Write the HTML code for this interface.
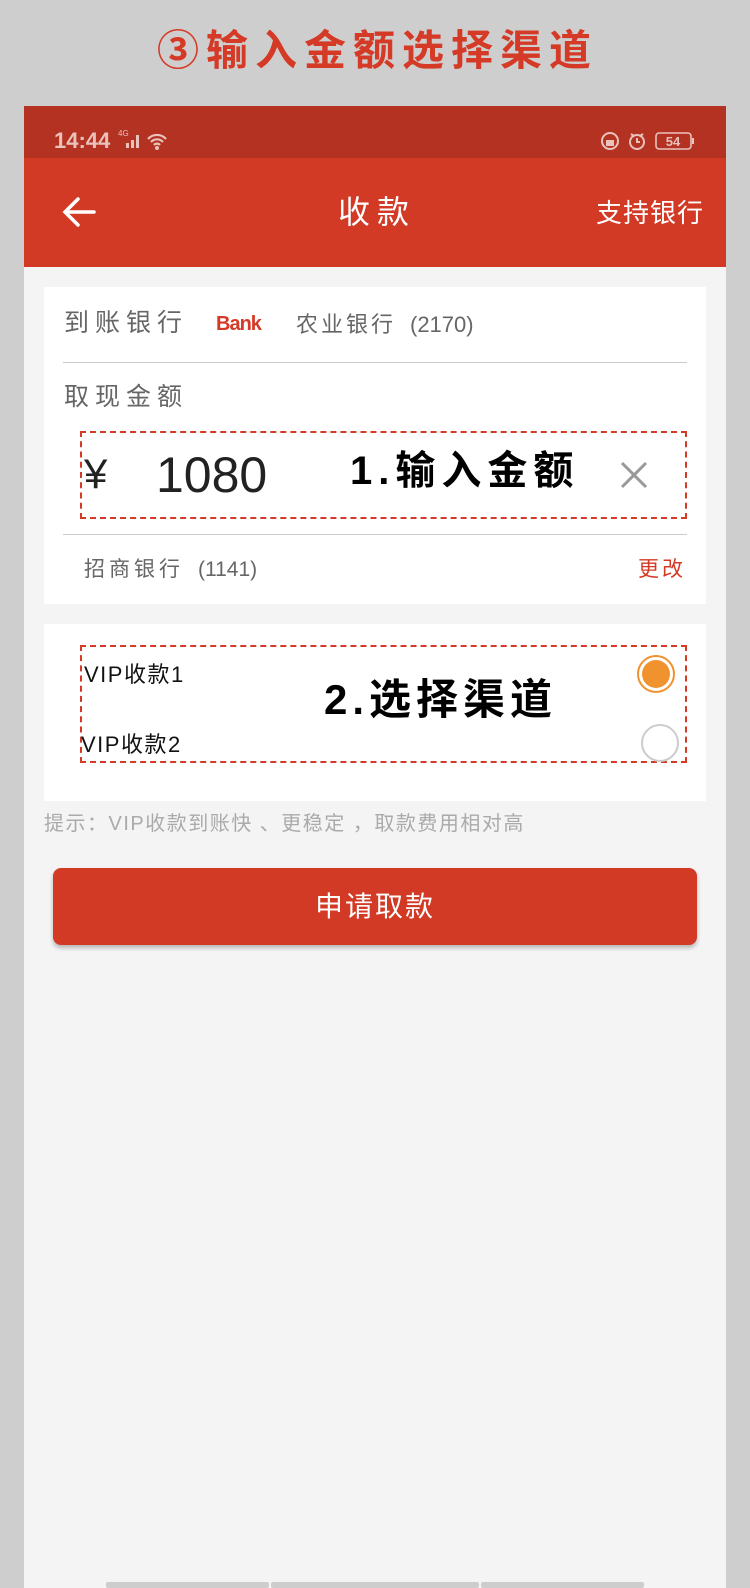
<!DOCTYPE html>
<html><head><meta charset="utf-8"><style>
*{margin:0;padding:0;box-sizing:border-box}
body{width:750px;height:1588px;background:#cecece;position:relative;overflow:hidden;font-family:"Liberation Sans","Noto Sans CJK SC",sans-serif}
.a{position:absolute;white-space:nowrap;line-height:1}
</style></head><body>
<div class="a" style="left:157px;top:30px;font-size:42px;font-weight:bold;color:#d43a26;letter-spacing:7px">③输入金额选择渠道</div>
<div class="a" style="left:24px;top:106px;width:702px;height:1482px;background:#f4f4f4"></div>
<div class="a" style="left:24px;top:106px;width:702px;height:52px;background:#b33222"></div>
<div class="a" style="left:54px;top:130px;font-size:22px;font-weight:bold;color:#e9c2bc">14:44</div>
<div class="a" style="left:118px;top:130px;font-size:8px;color:#e9c2bc">4G</div>
<svg class="a" style="left:126px;top:131px" width="50" height="20"><g fill="#e9c2bc"><rect x="0" y="12" width="3" height="5"/><rect x="5" y="9" width="3" height="8"/><rect x="10" y="4" width="3" height="13"/></g><path d="M22 8a12 12 0 0 1 18 0M25 11a8 8 0 0 1 12 0M28 14a4 4 0 0 1 6 0" stroke="#e9c2bc" stroke-width="2.2" fill="none"/><circle cx="31" cy="17" r="2" fill="#e9c2bc"/></svg>
<svg class="a" style="left:600px;top:130px" width="95" height="22"><circle cx="10" cy="11" r="8" fill="none" stroke="#e9c2bc" stroke-width="2"/><rect x="6" y="10" width="8" height="6" fill="#e9c2bc"/><circle cx="37" cy="12" r="7" fill="none" stroke="#e9c2bc" stroke-width="2"/><path d="M37 8v4h3M31 4l3 2M43 4l-3 2" stroke="#e9c2bc" stroke-width="2" fill="none"/><rect x="56" y="3" width="35" height="16" rx="3" fill="none" stroke="#e9c2bc" stroke-width="1.6"/><rect x="92" y="8" width="2" height="6" fill="#e9c2bc"/><text x="73" y="16" font-size="13" font-weight="bold" fill="#e9c2bc" text-anchor="middle" font-family="Liberation Sans">54</text></svg>
<div class="a" style="left:24px;top:158px;width:702px;height:109px;background:#d33a26"></div>
<svg class="a" style="left:62px;top:196px" width="34" height="32"><path d="M32 16H4M16 3L3 16l13 13" stroke="#fff" stroke-width="3.5" fill="none" stroke-linecap="round"/></svg>
<div class="a" style="left:338px;top:196px;font-size:32px;color:#fff;letter-spacing:7px">收款</div>
<div class="a" style="left:596px;top:200px;font-size:26px;color:#fff;letter-spacing:1px">支持银行</div>

<div class="a" style="left:44px;top:287px;width:662px;height:317px;background:#fff"></div>
<div class="a" style="left:64px;top:311px;font-size:25px;color:#666;letter-spacing:6px">到账银行</div>
<div class="a" style="left:216px;top:314px;font-size:20px;font-weight:bold;color:#d43a26;letter-spacing:-1px">Bank</div>
<div class="a" style="left:296px;top:314px;font-size:22px;color:#666;letter-spacing:3px">农业银行</div>
<div class="a" style="left:410px;top:314px;font-size:22px;color:#666">(2170)</div>
<div class="a" style="left:63px;top:362px;width:624px;height:1px;background:#ccc"></div>
<div class="a" style="left:64px;top:385px;font-size:25px;color:#666;letter-spacing:6px">取现金额</div>
<div class="a" style="left:80px;top:431px;width:607px;height:88px;border:2px dashed #d43a26"></div>
<div class="a" style="left:84px;top:453px;font-size:42px;color:#222">¥</div>
<div class="a" style="left:156px;top:450px;font-size:50px;color:#222">1080</div>
<div class="a" style="left:350px;top:451px;font-size:40px;font-weight:bold;color:#000;letter-spacing:6px">1.输入金额</div>
<svg class="a" style="left:620px;top:461px" width="28" height="28"><path d="M2 2l24 24M26 2L2 26" stroke="#999" stroke-width="3"/></svg>
<div class="a" style="left:63px;top:534px;width:624px;height:1px;background:#ccc"></div>
<div class="a" style="left:84px;top:559px;font-size:21px;color:#666;letter-spacing:4px">招商银行</div>
<div class="a" style="left:198px;top:559px;font-size:21px;color:#666">(1141)</div>
<div class="a" style="left:638px;top:559px;font-size:21px;color:#d43a26;letter-spacing:3px">更改</div>

<div class="a" style="left:44px;top:624px;width:662px;height:177px;background:#fff"></div>
<div class="a" style="left:80px;top:645px;width:607px;height:118px;border:2px dashed #d43a26"></div>
<div class="a" style="left:84px;top:664px;font-size:22px;color:#111;letter-spacing:1.5px">VIP收款1</div>
<div class="a" style="left:81px;top:734px;font-size:22px;color:#111;letter-spacing:1.5px">VIP收款2</div>
<div class="a" style="left:324px;top:679px;font-size:42px;font-weight:bold;color:#000;letter-spacing:5px">2.选择渠道</div>
<svg class="a" style="left:636px;top:654px" width="42" height="42"><circle cx="20" cy="20" r="18" fill="none" stroke="#f0932f" stroke-width="2"/><circle cx="20" cy="20" r="14" fill="#f0932f"/></svg>
<svg class="a" style="left:640px;top:723px" width="42" height="42"><circle cx="20" cy="20" r="18" fill="none" stroke="#ccc" stroke-width="2"/></svg>
<div class="a" style="left:44px;top:814px;font-size:20px;color:#aaa;letter-spacing:1.5px">提示：VIP收款到账快 、更稳定 ，取款费用相对高</div>
<div class="a" style="left:53px;top:868px;width:644px;height:77px;background:#d33a26;border-radius:8px;box-shadow:0 3px 4px rgba(0,0,0,.25);color:#fff;font-size:28px;text-align:center;line-height:77px;letter-spacing:2px">申请取款</div>
<div class="a" style="left:106px;top:1582px;width:163px;height:6px;background:#cdcdcd;border-radius:2px"></div>
<div class="a" style="left:271px;top:1582px;width:208px;height:6px;background:#cdcdcd;border-radius:2px"></div>
<div class="a" style="left:481px;top:1582px;width:163px;height:6px;background:#cdcdcd;border-radius:2px"></div>
</body></html>
